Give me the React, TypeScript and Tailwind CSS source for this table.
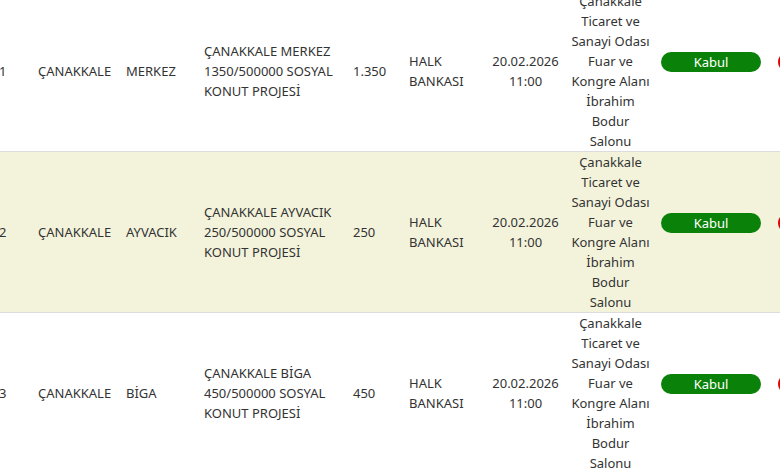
import React from "react";

type Row = {
  no: number;
  il: string;
  ilce: string;
  proje: string;
  konut: string;
  banka: string;
  tarih: string;
  saat: string;
  yer: string;
};

const yer = "Çanakkale Ticaret ve Sanayi Odası Fuar ve Kongre Alanı İbrahim Bodur Salonu";

const rows: Row[] = [
  {
    no: 1,
    il: "ÇANAKKALE",
    ilce: "MERKEZ",
    proje: "ÇANAKKALE MERKEZ 1350/500000 SOSYAL KONUT PROJESİ",
    konut: "1.350",
    banka: "HALK BANKASI",
    tarih: "20.02.2026",
    saat: "11:00",
    yer,
  },
  {
    no: 2,
    il: "ÇANAKKALE",
    ilce: "AYVACIK",
    proje: "ÇANAKKALE AYVACIK 250/500000 SOSYAL KONUT PROJESİ",
    konut: "250",
    banka: "HALK BANKASI",
    tarih: "20.02.2026",
    saat: "11:00",
    yer,
  },
  {
    no: 3,
    il: "ÇANAKKALE",
    ilce: "BİGA",
    proje: "ÇANAKKALE BİGA 450/500000 SOSYAL KONUT PROJESİ",
    konut: "450",
    banka: "HALK BANKASI",
    tarih: "20.02.2026",
    saat: "11:00",
    yer,
  },
];

const TableRow = ({ row, striped }: { row: Row; striped: boolean }) => {
  return (
    <div
      className={
        "flex items-center h-[161px] border-b border-[#dcdcdc] " +
        (striped ? "bg-[#f3f3dc]" : "bg-white")
      }
    >
      <div className="w-[39px] shrink-0">{row.no}</div>
      <div className="w-[88px] shrink-0">{row.il}</div>
      <div className="w-[78px] shrink-0">{row.ilce}</div>
      <div className="w-[149px] shrink-0 pr-3">{row.proje}</div>
      <div className="w-[56px] shrink-0">{row.konut}</div>
      <div className="w-[77px] shrink-0 pr-3">{row.banka}</div>
      <div className="w-[79px] shrink-0 text-center px-1">
        {row.tarih} {row.saat}
      </div>
      <div className="w-[91px] shrink-0 text-center px-[6px]">{row.yer}</div>
      <div className="w-[122px] shrink-0 pl-[5px]">
        <button className="w-[100px] h-[20px] mb-[19px] rounded-full bg-[#0a820a] text-white leading-[20px]">
          Kabul
        </button>
      </div>
      <div className="w-[100px] shrink-0">
        {/* reject button, only its left edge is on screen */}
        <button
          aria-label="Red"
          className="block w-[100px] h-[20px] mb-[19px] rounded-full bg-[#e60000]"
        />
      </div>
    </div>
  );
};

export default function App() {
  return (
    <div
      className="w-[780px] h-[470px] overflow-hidden bg-white text-[13px] leading-[20px] text-[#333333]"
      style={{ fontFamily: '"Noto Sans", "Open Sans", sans-serif' }}
    >
      <div className="mt-[-9px] ml-[-1px] w-[900px]">
        {rows.map((row, i) => (
          <TableRow key={row.no} row={row} striped={i % 2 === 1} />
        ))}
      </div>
    </div>
  );
}
